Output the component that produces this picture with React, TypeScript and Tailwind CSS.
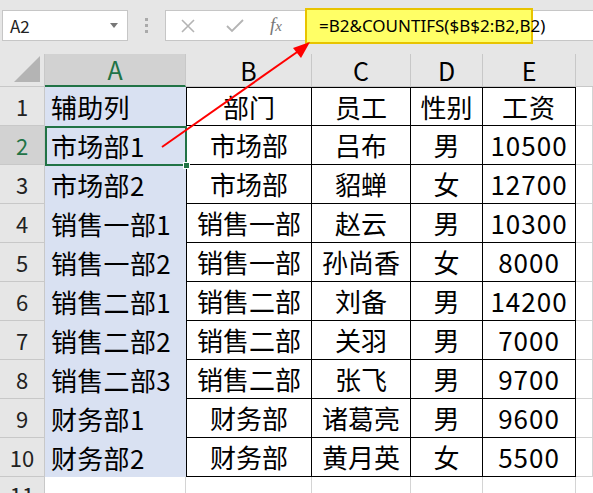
import React from "react";

const rows: [string, string, string, string, string][] = [
  ["辅助列", "部门", "员工", "性别", "工资"],
  ["市场部1", "市场部", "吕布", "男", "10500"],
  ["市场部2", "市场部", "貂蝉", "女", "12700"],
  ["销售一部1", "销售一部", "赵云", "男", "10300"],
  ["销售一部2", "销售一部", "孙尚香", "女", "8000"],
  ["销售二部1", "销售二部", "刘备", "男", "14200"],
  ["销售二部2", "销售二部", "关羽", "男", "7000"],
  ["销售二部3", "销售二部", "张飞", "男", "9700"],
  ["财务部1", "财务部", "诸葛亮", "男", "9600"],
  ["财务部2", "财务部", "黄月英", "女", "5500"],
];

const cols = ["A", "B", "C", "D", "E"];
const grid = "grid grid-cols-[45px_141px_126px_99px_72px_93px_1fr]";
const font = { fontFamily: '"Noto Sans CJK SC", "Noto Sans", sans-serif' };

export default function App() {
  return (
    <div className="relative h-[493px] w-[593px] overflow-hidden bg-white" style={font}>
      {/* Formula bar */}
      <div className="flex h-[54px] items-start bg-[#e6e6e6] pt-[10px]">
        <div className="ml-[2px] flex h-[31px] w-[126px] items-center justify-between border border-[#c6c6c6] bg-white pl-[7px] pr-[9px]">
          <span className="text-[17px] text-[#222]">A2</span>
          <span className="h-0 w-0 border-x-[4px] border-t-[5px] border-x-transparent border-t-[#777]" />
        </div>
        <div className="ml-[17px] mt-[8px] flex flex-col gap-[3px]">
          <span className="h-[3px] w-[3px] bg-[#aaa]" />
          <span className="h-[3px] w-[3px] bg-[#aaa]" />
          <span className="h-[3px] w-[3px] bg-[#aaa]" />
        </div>
        <div className="ml-[17px] flex h-[31px] flex-1 items-center border-y border-l border-[#c6c6c6] bg-white">
          <svg width="16" height="16" viewBox="0 0 16 16" className="ml-[14px]">
            <path d="M2 2 L14 14 M14 2 L2 14" stroke="#b4b4b4" strokeWidth="1.6" />
          </svg>
          <svg width="18" height="16" viewBox="0 0 18 16" className="ml-[30px]">
            <path d="M1 8 L6 13 L17 2" stroke="#b4b4b4" strokeWidth="1.8" fill="none" />
          </svg>
          <span
            className="ml-[26px] text-[19px] italic text-[#777]"
            style={{ fontFamily: '"Liberation Serif", serif' }}
          >
            f<span className="text-[15px]">x</span>
          </span>
        </div>
      </div>

      {/* Formula overlay */}
      <div className="absolute left-[305px] top-[8px] flex h-[36px] w-[228px] items-center border-2 border-[#e8c400] bg-[#ffff66] pl-[12px] text-[17px] text-black" style={{ fontFamily: '"Noto Sans", sans-serif' }}>
        =B2&amp;COUNTIFS($B$2:B2,B2)
      </div>

      {/* Column headers */}
      <div className={`${grid} h-[33px] bg-[#e6e6e6]`}>
        <div className="relative border-r border-b border-[#c8c8c8]">
          <span className="absolute bottom-[4px] right-[4px] h-0 w-0 border-b-[26px] border-l-[26px] border-l-transparent border-b-[#b4b4b4]" />
        </div>
        {cols.map((c) => (
          <div
            key={c}
            className={`flex items-center justify-center border-r border-[#c8c8c8] text-[25px] leading-none ${
              c === "A" ? "border-b-2 border-b-[#217346] bg-[#d2d2d2] text-[#217346]" : "border-b border-b-[#c8c8c8] text-black"
            }`}
          >
            {c}
          </div>
        ))}
        <div className="border-b border-[#c8c8c8]" />
      </div>

      {/* Body */}
      {rows.map((r, i) => (
        <div key={i} className={`${grid} h-[39px]`}>
          <div
            className={`flex items-center justify-center border-r border-b border-[#c8c8c8] text-[22px] ${
              i === 1 ? "bg-[#d2d2d2] text-[#217346]" : "bg-[#e6e6e6] text-[#222]"
            }`}
          >
            {i + 1}
          </div>
          <div className="flex items-center bg-[#d9e1f2] pl-[6px] text-[26px] leading-none tracking-[0.3px] text-black">{r[0]}</div>
          {r.slice(1).map((v, j) => (
            <div
              key={j}
              className={`flex items-center justify-center border-r border-b border-black text-[26px] leading-none text-black ${
                i === 0 ? "border-t" : ""
              } ${j === 0 ? "border-l" : ""} ${j === 3 ? "tracking-[1px]" : ""}`}
            >
              {v}
            </div>
          ))}
          <div className="border-r border-b border-[#d4d4d4]" />
        </div>
      ))}

      {/* Row 11 */}
      <div className={`${grid} h-[39px]`}>
        <div className="flex items-start justify-center border-r border-[#c8c8c8] bg-[#e6e6e6] text-[22px] leading-[34px] text-[#222]">11</div>
        <div className="border-r border-[#d4d4d4]" />
        <div className="border-r border-[#d4d4d4]" />
        <div className="border-r border-[#d4d4d4]" />
        <div className="border-r border-[#d4d4d4]" />
        <div className="border-r border-[#d4d4d4]" />
        <div />
      </div>

      {/* Selection A2 */}
      <div className="absolute left-[45px] top-[126px] h-[40px] w-[142px] border-2 border-[#217346]" />
      <div className="absolute left-[183px] top-[162px] h-[7px] w-[7px] border border-white bg-[#217346]" />

      {/* Arrow */}
      <svg className="pointer-events-none absolute left-0 top-0" width="593" height="493">
        <line x1="162" y1="147" x2="300" y2="50" stroke="#ff0000" strokeWidth="2" />
        <polygon points="310,42 293,48 301,58" fill="#ff0000" />
      </svg>
    </div>
  );
}
